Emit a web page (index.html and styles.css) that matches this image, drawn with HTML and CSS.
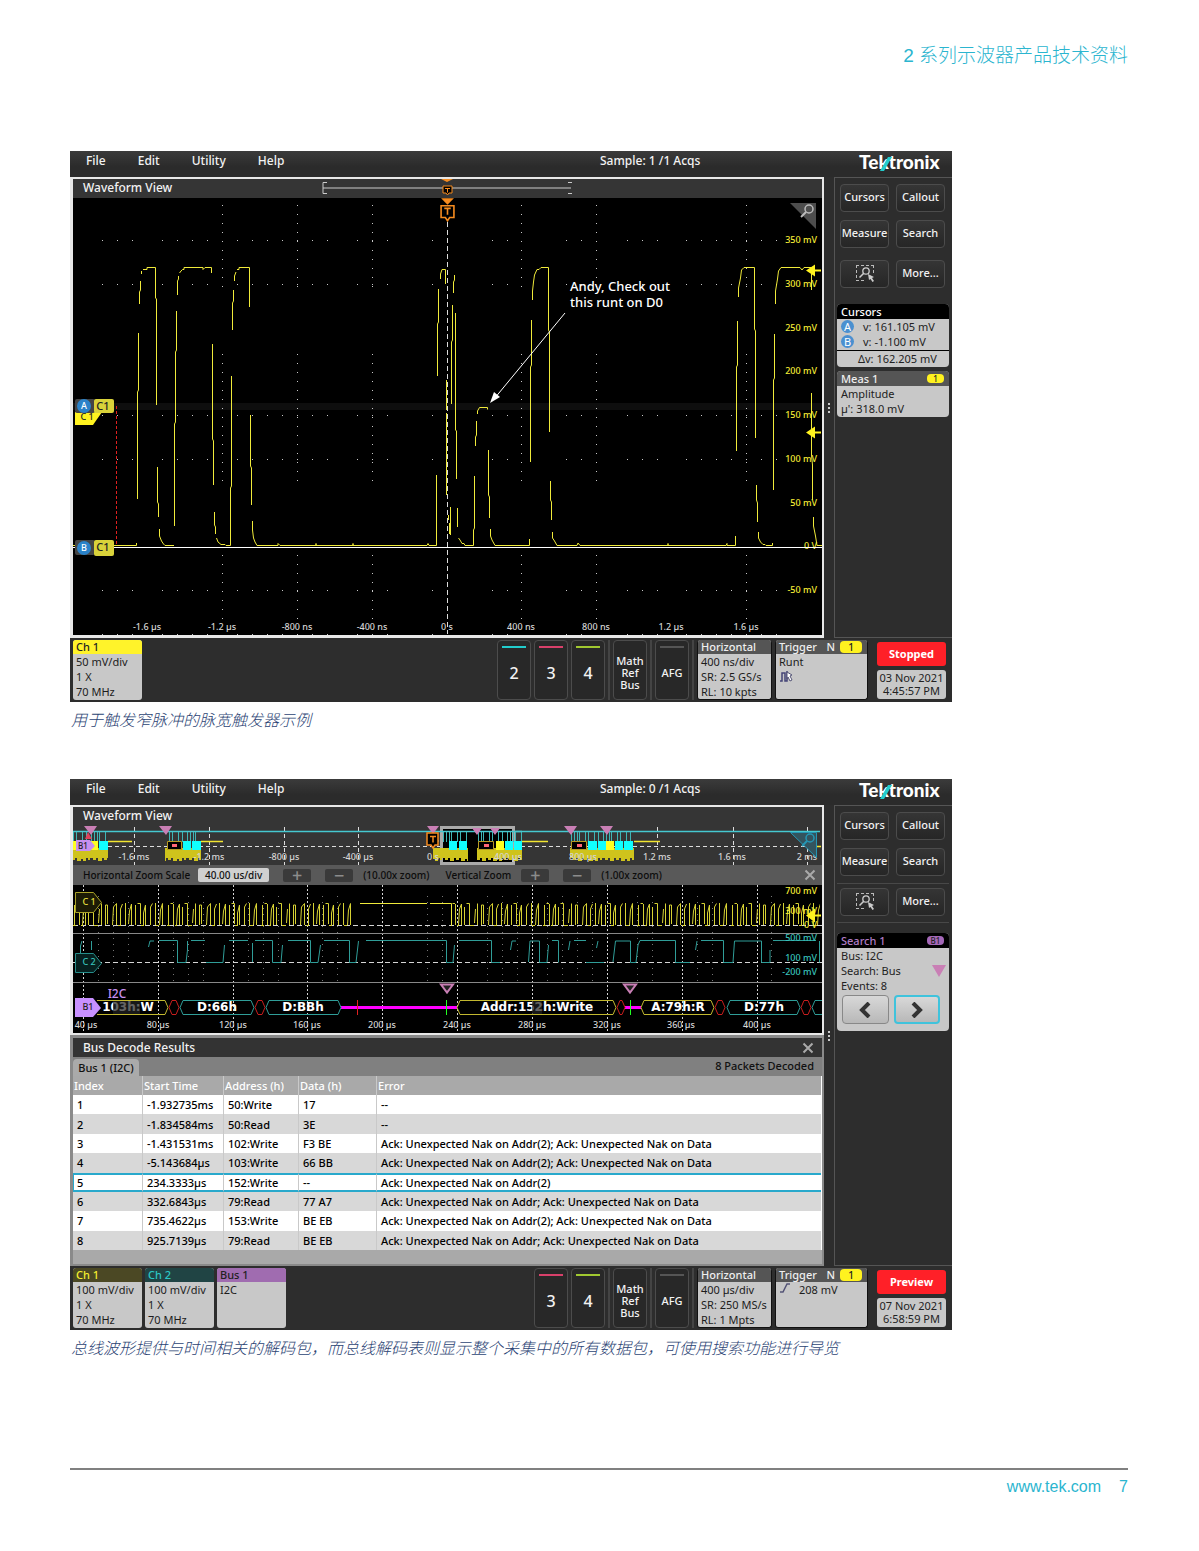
FILE: index.html
```html
<!DOCTYPE html>
<html lang="zh-CN">
<head>
<meta charset="utf-8">
<meta name="viewport" content="width=device-width, initial-scale=1">
<title>2 系列示波器产品技术资料</title>
<link rel="stylesheet" href="styles.css">
</head>
<body>
<svg class="defs" aria-hidden="true">
  <defs>
    <symbol id="zoom-select" viewBox="0 0 20 18">
      <path d="M1 1.500h18M1 16.500h10M1.500 1v15M18.500 1v9" fill="none" stroke="#bbb" stroke-dasharray="3 2"/>
      <circle cx="11" cy="7" r="3.200" fill="none" stroke="#ccc" stroke-width="1.300"/>
      <path d="M8.500 9.500L4.500 13.500" stroke="#ccc" stroke-width="1.600"/>
      <path d="M13 10l6 3-2 1 2 3-1.500 1-2-3-1.500 1z" fill="#ccc"/>
    </symbol>
    <symbol id="cross" viewBox="0 0 12 12">
      <path d="M1.500 1.500l9 9M10.500 1.500l-9 9" stroke="#aaa" stroke-width="2" fill="none"/>
    </symbol>
    <symbol id="trig" viewBox="0 0 14 22">
      <path d="M1 0h12l-6 6z" fill="#f58b1f"/>
      <path d="M1 7h12v11h-4l-2 3-2-3H1z" fill="#000" stroke="#f58b1f" stroke-width="1.500"/>
      <path d="M4 9.500h6M7 9.500v6" stroke="#f58b1f" stroke-width="1.500"/>
    </symbol>
  </defs>
</svg>
<div class="page">
  <header class="doc-head">2 系列示波器产品技术资料</header>
  <main class="figures">
    <figure class="figure">
      <div class="scope">
        <div class="menubar">
          <nav class="menus">
            <button type="button">File</button><button type="button">Edit</button><button type="button">Utility</button><button type="button">Help</button>
          </nav>
          <span class="acqs">Sample: 1 /1 Acqs</span>
          <span class="logo">Te<span class="k">k<svg viewBox="0 0 12 16" aria-hidden="true"><path d="M0 16L8 2h4L4 16z" fill="#2cc"/></svg></span>tronix</span>
        </div>
        <div class="work">
          <section class="wave">
            <div class="wave-title"><h2>Waveform View</h2>
              <svg class="extent" viewBox="320 179 256 19" aria-hidden="true">
                <path d="M327 182.500h-4v11h4M323 188h248M568 182.500h4M568 193.500h4" fill="none" stroke="#ccc"/>
                <path d="M441 179h12l-6 3z" fill="#f58b1f"/>
                <path d="M443 186h9v7h-3l-1.500 2-1.500-2h-3z" fill="#000" stroke="#f58b1f"/>
                <path d="M445 188.500h5M447.500 188.500v4" stroke="#f58b1f"/>
              </svg>
            </div>
            <svg class="plot" viewBox="73 198 749 437" role="img" aria-label="Channel 1 waveform">
              <rect x="73" y="403" width="749" height="7" fill="#0e0e0e"/>
              <g class="dots-v">
                <path d="M222.500 205v82M297.500 205v82M372.500 205v82M521.500 205v82M596.500 205v82M746.500 205v82"/>
                <path d="M222.500 354v132M297.500 354v132M372.500 354v132M521.500 354v132M596.500 354v132M746.500 354v132"/>
                <path d="M222.500 555v66M297.500 555v66M372.500 555v66M521.500 555v66M596.500 555v66M746.500 555v66"/>
              </g>
              <g class="dots-h">
                <path id="row" d="M102 240.500h31M162 240.500h46M237 240.500h91M357 240.500h31M432 240.500h2M492 240.500h16M566 240.500h16M627 240.500h31M686 240.500h95"/>
                <use href="#row" y="44"/><use href="#row" y="175"/><use href="#row" y="219"/><use href="#row" y="350"/><use href="#row" y="394"/>
              </g>
              <path d="M447.500 222V634" stroke="#ddd" stroke-dasharray="5 3"/>
              <path d="M116.500 406V545" stroke="#e02020" stroke-dasharray="3 2"/>
              <g class="axis-y">
                <text x="817" y="243">350 mV</text><text x="817" y="287">300 mV</text><text x="817" y="331">250 mV</text><text x="817" y="374">200 mV</text><text x="817" y="418">150 mV</text><text x="817" y="462">100 mV</text><text x="817" y="506">50 mV</text><text x="817" y="549">0 V</text><text x="817" y="593">-50 mV</text>
              </g>
              <g class="axis-x">
                <text x="147" y="630">-1.6 µs</text><text x="222" y="630">-1.2 µs</text><text x="297" y="630">-800 ns</text><text x="372" y="630">-400 ns</text><text x="447" y="630">0 s</text><text x="521" y="630">400 ns</text><text x="596" y="630">800 ns</text><text x="671" y="630">1.2 µs</text><text x="746" y="630">1.6 µs</text>
              </g>
              <path d="M73 547.500H822" stroke="#fff" stroke-width="1"/>
              <g class="ch1">
                <path d="M73 545.500H136.500V543M137.500 499V392L138.500 390V333M139.500 304V292L140.500 290V281M141.500 274V271M143 269.500H147V267.500H155.500V298L156.500 299V405M157.500 467V502L158.500 504V517M159.500 529V536L161.500 541L163.500 544L165 545.500H174"/>
                <path d="M174.500 526V424L175.500 422V352L176.500 350V311M177.500 295V281L178.500 279V276M179.500 273L181 271L182.500 269.500H184V267.500H203V269.500L205 267.500H211.500V273M212.500 344V439L213.500 441V485M214.500 512V525L215.500 527V534M216.500 538L218 542L221 544.500H225L226 545.500H230.500V488L231.500 486V376M232.500 330V303L233.500 301V290M234.500 281V276L236 272M237 269.500H239V267.500H249.500V307"/>
                <path d="M250.500 415V466L251.500 468V505M252.500 521V530L253.500 538L255 542L257 545.500H278V543.500L280 545.500H316V543.500V545.500H353V543.500V545.500H427L428 543.500L429 545.500H436.500V475M437.500 376V324L438.500 322V289M440.500 279V274L442 269.500H445.500V284M446.500 380V410M446.500 413V495M448.500 515V520M449.500 523V534M450.500 507V535M451.500 404V342L452.500 340V305M453.500 293V282L454.500 280V275M455.500 313V430L456.500 431V479M457.500 508V527M458.500 538L460 540L462 543.500H464L465 545.500H473.500V530L474.500 528V476M475.500 446V437L476.500 435V421M477.500 414V411L479.500 407.500H487.500V409.500M488.500 450V495L489.500 497V518M490.500 529V536L492 540L495 545.500H529.500V539"/>
                <path d="M530.500 462V367L531.500 365V320M532.500 300V291L533.500 282L534.500 275L537 269.500H539L541 267.500H548.500V330L549.500 332V432M550.500 481V500L551.500 502V520M552.500 532V538L554.500 541L557 545.500H577L578 543L580 545.500H668V543.500V545.500H726L727 543.500V545.500H735.500V536M736.500 451V367L737.500 365V321M738.500 297V288L740.500 278L741.500 270L744 267.500H754.500V329L755.500 331V438M756.500 485V500L757.500 503V522M758.500 532V538L760.500 542L763 544.500H765L766 545.500H772.500V543M773.500 490V380L774.500 378V334M775.500 304V291L777.500 279L778.500 271L781 267.500H800L802 270L804 267.500H811.500V290M811.500 393V455L812.500 465V500M813.500 517V526L815.500 536L817 545.500H822"/>
              </g>
              <path class="ptr" d="M806 270.500l9-6v12zM813 269.500h8v2h-8zM806 432.500l9-6v12zM813 431.500h8v2h-8z"/>
              <path d="M565 313L494 399" stroke="#fff"/><path d="M490 403l4-11 6 5z" fill="#fff"/>
              <g class="note"><text x="570" y="291">Andy, Check out</text><text x="570" y="307">this runt on D0</text></g>
              <use href="#trig" x="440" y="198" width="15" height="24"/>
              <path d="M790 203h26v26z" fill="#4d4d4d"/><circle cx="809" cy="209" r="4" fill="none" stroke="#bbb" stroke-width="1.500"/><path d="M806 212l-5 5" stroke="#bbb" stroke-width="2"/>
              <g class="tags">
                <path d="M75 412h27l-9 13H75z" fill="#fff21f"/><text class="dk" x="87" y="420">C 1</text>
                <rect x="75" y="399" width="20" height="14" rx="2" fill="#444"/><circle cx="84" cy="406" r="7" fill="#2a82c9"/><text x="84" y="409">A</text>
                <rect x="94" y="399" width="20" height="14" rx="2" fill="#d9d23a"/><text class="dk big" x="103" y="410">C1</text>
                <rect x="75" y="540" width="20" height="15" rx="2" fill="#444"/><circle cx="84" cy="548" r="7" fill="#2a82c9"/><text x="84" y="551">B</text>
                <rect x="94" y="540" width="20" height="16" rx="2" fill="#d9d23a"/><text class="dk big" x="103" y="551">C1</text>
              </g>
            </svg>
          </section>
        </div>
        <div class="grip"><i></i><i></i><i></i></div>
        <aside class="side">
          <div class="tools">
            <button type="button">Cursors</button><button type="button">Callout</button><button type="button">Measure</button><button type="button">Search</button>
          </div>
          <div class="tools extra">
            <button type="button" aria-label="Zoom select"><svg class="ico"><use href="#zoom-select"/></svg></button><button type="button">More...</button>
          </div>
          <section class="card">
            <h3 class="black">Cursors</h3>
            <p class="cur"><span class="dot">A</span>v: 161.105 mV</p>
            <p class="cur"><span class="dot">B</span>v: -1.100 mV</p>
            <p class="delta">Δv: 162.205 mV</p>
          </section>
          <section class="card">
            <h3>Meas 1<span class="pill">1</span></h3>
            <p>Amplitude</p>
            <p>µ': 318.0 mV</p>
          </section>
        </aside>
        <footer class="status">
          <section class="badge"><h3 class="c1">Ch 1</h3><p>50 mV/div</p><p>1 X</p><p>70 MHz</p></section>
          <div class="controls">
            <button type="button" class="key cyan">2</button><button type="button" class="key red">3</button><button type="button" class="key green">4</button><i class="sep"></i>
            <button type="button" class="key small">Math<br>Ref<br>Bus</button><i class="sep"></i>
            <button type="button" class="key small grey">AFG</button><i class="sep"></i>
            <section class="badge horiz"><h3>Horizontal</h3><p>400 ns/div</p><p>SR: 2.5 GS/s</p><p>RL: 10 kpts</p></section>
            <section class="badge trigger"><h3>Trigger<span class="n">N</span><span class="pill">1</span></h3><p>Runt</p><p><svg class="runt" viewBox="0 0 14 14" aria-hidden="true"><path d="M1 12h2V4h3v8h2V2" fill="none" stroke="#447" stroke-width="1.500"/><path d="M8 3l5 3-2 1 2 4-2 1-2-4-1 2z" fill="#fff" stroke="#557"/></svg></p></section>
            <div class="run"><button type="button">Stopped</button><p>03 Nov 2021<br>4:45:57 PM</p></div>
          </div>
        </footer>
      </div>
      <figcaption>用于触发窄脉冲的脉宽触发器示例</figcaption>
    </figure>

    <figure class="figure">
      <div class="scope">
        <div class="menubar">
          <nav class="menus">
            <button type="button">File</button><button type="button">Edit</button><button type="button">Utility</button><button type="button">Help</button>
          </nav>
          <span class="acqs">Sample: 0 /1 Acqs</span>
          <span class="logo">Te<span class="k">k<svg viewBox="0 0 12 16" aria-hidden="true"><path d="M0 16L8 2h4L4 16z" fill="#2cc"/></svg></span>tronix</span>
        </div>
        <div class="work">
          <section class="wave">
            <div class="wave-title"><h2>Waveform View</h2></div>
            <svg class="plot over" viewBox="73 826 749 39" role="img" aria-label="Overview">
              <defs>
                <pattern id="burst" x="570" y="826" width="32" height="39" patternUnits="userSpaceOnUse">
                  <path d="M1.500 6v10M4.500 6v10M7.500 6v10M9.500 6v10M15.500 6v10M18.500 6v10M24.500 6v10M28.500 6v10" stroke="#3fb5b5"/>
                  <path d="M0 22h32v12h-2v-2h-2v3h-3v-2h-2v2h-4v-3h-2v2h-3v-2h-2v3h-4v-3h-2v2h-3v-2H0z" fill="#cfc31c"/>
                </pattern>
                <pattern id="clk" x="73" y="895" width="94" height="34" patternUnits="userSpaceOnUse">
                  <path d="M1.500 30V10M3.500 8.500H6M6.500 9V30M9.500 30L10.500 14L12.500 9V30M15.500 30V12M17.500 8.500H20.500V30M25.500 28L26.500 14M28.500 8.500V30M32.500 30V10H34.500V29M39.500 30L40.500 12L43.500 8.500V30M47.500 30V14L49.500 9M52.500 8V30M55.500 29L56.500 16L58.500 9V30M62.500 30V10M64.500 8.500H67.500V29M70.500 30V18L72.500 10V30M77.500 30V12L79.500 8.500M82.500 8V30M86.500 30L87.500 15L89.500 8.500V30M0 30.500H3M8 30.500H10M21 30.500H25M45 30.500H48M68 30.500H71M83 30.500H86" fill="none" stroke="#d6d133"/>
                </pattern>
              </defs>
              <path d="M73 846.500H821" stroke="#ddd" stroke-dasharray="4 3"/>
              <path d="M134.500 827V865M209.500 827V865M284.500 827V865M358.500 827V865M657.500 827V850M733.500 827V865M807.500 827V865" stroke="#ddd" stroke-dasharray="4 3"/>
              <path d="M73 831.500H820" stroke="#45c8d0" stroke-width="1.500"/>
              <path d="M108 841.500h24M201 841.500h22M522 841.500h26M634 841.500h26M817 846.500h4" stroke="#f2e530" stroke-width="1.500"/>
              <rect x="440" y="826" width="75" height="39" fill="#aaa"/>
              <path d="M443 829h69v33h-69z" fill="#000"/>
              <path d="M73 826h35v39h-35zM165 826h36v39h-36zM433 840h10v25h-10zM443 826h25v39h-25zM477 826h45v39h-45zM570 826h64v39h-64z" fill="url(#burst)"/>
              <path d="M440 831.500H522" stroke="#45c8d0" stroke-width="1.500"/>
              <path d="M440 827.500h75M440 863.500h75" stroke="#aaa" stroke-width="2"/>
              <g class="axis-x"><text x="134" y="860">-1.6 ms</text><text x="209" y="860">-1.2 ms</text><text x="284" y="860">-800 µs</text><text x="358" y="860">-400 µs</text><text x="433" y="860">0 s</text><text x="508" y="860">400 µs</text><text x="583" y="860">800 µs</text><text x="657" y="860">1.2 ms</text><text x="732" y="860">1.6 ms</text><text x="807" y="860">2 ms</text></g>
              <path d="M99 841h9v9h-9zM183 841h8v9h-8zM192 841h9v9h-9zM449 841h8v9h-8zM459 841h8v9h-8zM505 841h8v9h-8zM514 841h8v9h-8zM588 841h9v9h-9zM598 841h8v9h-8zM615 841h8v9h-8zM624 841h9v9h-9z" fill="#1ff"/>
              <path d="M73 841h3v9h-3zM90 841h8v9h-8zM496 841h8v9h-8zM606 841h8v9h-8z" fill="#ff2"/>
              <path d="M167.500 841.500h14v8h-14zM478.500 841.500h15v8h-15zM571.500 841.500h15v8h-15z" fill="#000" stroke="#b79a22"/>
              <path d="M172 845.500h5M484 845.500h5M577 845.500h5" stroke="#f67" stroke-width="3"/>
              <path class="mark" d="M84 826h13l-6 9zM159 826h13l-6 9zM427 826h12l-6 8zM564 826h13l-6 9zM600 826h13l-6 9zM472 828h10l-5 7zM490 828h10l-5 7z"/>
              <path d="M85 839l3-7 4 7z" fill="#e0405a"/>
              <path d="M76 840h14l5 6-5 5H76z" fill="#c890f0"/><text class="tiny" x="83" y="849">B1</text>
              <path d="M427 833h11v12h-3l-2 3-2-3h-4z" fill="#000" stroke="#f58b1f" stroke-width="1.500"/><path d="M430 836.500h6M433 836.500v6" stroke="#f58b1f" stroke-width="1.500"/>
              <path d="M790.500 832.500h26v25z" fill="#33545e" stroke="#2596b4"/><circle cx="810" cy="838" r="4" fill="none" stroke="#2596b4" stroke-width="1.500"/><path d="M807 841l-5 5" stroke="#2596b4" stroke-width="2"/>
            </svg>
            <div class="zoombar">
              <label for="hz">Horizontal Zoom Scale</label><input id="hz" type="text" value="40.00 us/div">
              <button type="button">+</button><button type="button">−</button><span>(10.00x zoom)</span>
              <span class="vz">Vertical Zoom</span><button type="button">+</button><button type="button">−</button><span>(1.00x zoom)</span>
              <button type="button" class="close" aria-label="Close"><svg><use href="#cross"/></svg></button>
            </div>
            <svg class="plot" viewBox="73 885 749 148" role="img" aria-label="Zoomed waveforms and bus decode">
              <g stroke="#d5d5d5"><path stroke-dasharray="2 2" d="M83.500 885V1033M158.500 885V1033M233.500 885V1033M307.500 885V1033M382.500 885V1033M457.500 885V1033M532.500 885V1033M607.500 885V1033M682.500 885V1033M757.500 885V1033"/>
              <path stroke="#777" stroke-dasharray="1 5" d="M98.500 896V981M113.500 896V981M128.500 896V981M173.500 896V981M188.500 896V981M203.500 896V981M248.500 896V981M263.500 896V981M278.500 896V981M322.500 896V981M337.500 896V981M427.500 896V981M442.500 896V981M487.500 896V981M502.500 896V981M517.500 896V981M547.500 896V981M562.500 896V981M577.500 896V981M592.500 896V981M637.500 896V981M652.500 896V981M697.500 896V981M712.500 896V981M771.500 896V981"/>
              <path stroke-dasharray="5 3" d="M73 925.500H822M73 962.500H822"/></g>
              <path d="M73 933.500H822M73 982.500H822" stroke="#888"/>
              <path d="M73 895h282v34H73zM452 895h368v34H452z" fill="url(#clk)"/>
              <path class="ch1" d="M360 903.500H427M430 903.500H451.500V926"/>
              <path class="ch2" d="M80.500 962V946L82 941M91.500 941V950M148.500 947L150 941H154M159 940.500H177.500V962.500H186L187.500 950V941M191 940.500H205M206 962.500H223L224.500 945M229 940.500H248M252.500 962V943M255 940.500H272.500V962.500H281L282.500 945M288 940.500H310.500V962.500H318L320.500 945M324 940.500H349.500V962.500H356L358.500 941M366 940.500H446.500V962.500H453L454.500 945M459 940.500H491.500V962.500H500M510.500 950L512 941H516M528.500 962L530 941H539.500V962.500H547L548.500 945M552 940.500H558.500V962.500M568.500 950L570 941M574 940.500H586M586 962.500H604M596.500 948L598 941M613 962L615.500 941H630.500V962.500H636L638 945L640 940.500H675.500V962.500H690M695.500 950L697 941M701 940.500H723.500V962.500H733L734.500 941H761.500V962.500H770V950M773 940.500H816M819.500 941V962.500"/>
              <g class="axis-y"><text x="817" y="894">700 mV</text><text x="817" y="914">300 mV</text><text x="817" y="928">0 V</text></g>
              <g class="axis-y cy"><text x="817" y="941">500 mV</text><text x="817" y="961">100 mV</text><text x="817" y="975">-200 mV</text></g>
              <path class="ptr" d="M806 915.500l9-7v14zM813 914.500h8v2h-8z"/>
              <path d="M341 1007.500H457M625 1007.500H641" stroke="#f0f" stroke-width="3"/>
              <path d="M357.500 1000v15" stroke="#e02020"/><path d="M446.500 1000v15M630.500 1000v15" stroke="#2f2"/>
              <g class="bus">
                <path class="y" d="M97 1000.500h68l3 7-3 7H97M460 1000.500h153l3 7-3 7H460l-3-7zM644 1000.500h67l3 7-3 7h-67l-3-7z"/>
                <path class="r" d="M172 1000.500h4l3 7-3 7h-4l-3-7zM258 1000.500h4l3 7-3 7h-4l-3-7zM620 1000.500h2l3 7-3 7h-2l-3-7zM718 1000.500h4l3 7-3 7h-4l-3-7zM804 1000.500h4l3 7-3 7h-4l-3-7z"/>
                <path class="c" d="M183 1000.500h68l3 7-3 7h-68l-3-7zM269 1000.500h69l3 7-3 7h-69l-3-7zM730 1000.500h67l3 7-3 7h-67l-3-7zM822 1000.500h-7l-3 7 3 7h7"/>
                <text x="128" y="1011">103h:W</text><text x="217" y="1011">D:66h</text><text x="303" y="1011">D:BBh</text><text x="537" y="1011">Addr:152h:Write</text><text x="678" y="1011">A:79h:R</text><text x="764" y="1011">D:77h</text>
                <path d="M113 1001h27v13h-27zM532 1001h10v13h-10z" fill="#222" opacity=".7"/>
              </g>
              <g class="tags">
                <path d="M75.500 892.500h18l8 10-8 10h-18z" fill="#1c1b05" stroke="#a8a129"/><text class="yl" x="89" y="905">C 1</text>
                <path d="M75.500 953.500h18l8 10-8 9h-18z" fill="#06201f" stroke="#268d8a"/><text class="cl" x="89" y="965">C 2</text>
                <path d="M75 998h18l8 10-8 9H75z" fill="#c890ff"/><text class="dk" x="88" y="1010">B1</text>
                <text class="vi" x="117" y="998">I2C</text>
              </g>
              <path d="M441 984.500h12l-6 8zM624 984.500h12l-6 8z" fill="#222" stroke="#c97fb5" stroke-width="2"/>
              <g class="axis-x"><text x="86" y="1028">40 µs</text><text x="158" y="1028">80 µs</text><text x="233" y="1028">120 µs</text><text x="307" y="1028">160 µs</text><text x="382" y="1028">200 µs</text><text x="457" y="1028">240 µs</text><text x="532" y="1028">280 µs</text><text x="607" y="1028">320 µs</text><text x="681" y="1028">360 µs</text><text x="757" y="1028">400 µs</text></g>
            </svg>
          </section>
          <section class="results">
            <div class="results-title"><h2>Bus Decode Results</h2><button type="button" class="close" aria-label="Close"><svg><use href="#cross"/></svg></button></div>
            <div class="tabs"><button type="button">Bus 1 (I2C)</button><span>8 Packets Decoded</span></div>
            <table>
              <colgroup><col class="w1"><col class="w2"><col class="w3"><col class="w4"><col></colgroup>
              <thead><tr><th>Index</th><th>Start Time</th><th>Address (h)</th><th>Data (h)</th><th>Error</th></tr></thead>
              <tbody>
                <tr><td>1</td><td>-1.932735ms</td><td>50:Write</td><td>17</td><td>--</td></tr>
                <tr><td>2</td><td>-1.834584ms</td><td>50:Read</td><td>3E</td><td>--</td></tr>
                <tr><td>3</td><td>-1.431531ms</td><td>102:Write</td><td>F3 BE</td><td>Ack: Unexpected Nak on Addr(2); Ack: Unexpected Nak on Data</td></tr>
                <tr><td>4</td><td>-5.143684µs</td><td>103:Write</td><td>66 BB</td><td>Ack: Unexpected Nak on Addr(2); Ack: Unexpected Nak on Data</td></tr>
                <tr class="sel"><td>5</td><td>234.3333µs</td><td>152:Write</td><td>--</td><td>Ack: Unexpected Nak on Addr(2)</td></tr>
                <tr><td>6</td><td>332.6843µs</td><td>79:Read</td><td>77 A7</td><td>Ack: Unexpected Nak on Addr; Ack: Unexpected Nak on Data</td></tr>
                <tr><td>7</td><td>735.4622µs</td><td>153:Write</td><td>BE EB</td><td>Ack: Unexpected Nak on Addr(2); Ack: Unexpected Nak on Data</td></tr>
                <tr><td>8</td><td>925.7139µs</td><td>79:Read</td><td>BE EB</td><td>Ack: Unexpected Nak on Addr; Ack: Unexpected Nak on Data</td></tr>
              </tbody>
            </table>
          </section>
        </div>
        <div class="grip"><i></i><i></i><i></i></div>
        <aside class="side">
          <div class="tools">
            <button type="button">Cursors</button><button type="button">Callout</button><button type="button">Measure</button><button type="button">Search</button>
          </div>
          <div class="tools extra ruled">
            <button type="button" aria-label="Zoom select"><svg class="ico"><use href="#zoom-select"/></svg></button><button type="button">More...</button>
          </div>
          <section class="card search">
            <h3 class="black">Search 1<span class="pill">B1</span></h3>
            <p>Bus: I2C</p>
            <p class="bus-row">Search: Bus<svg viewBox="0 0 14 12" aria-hidden="true"><path d="M0 0h14L7 12z" fill="#c97fb5"/></svg></p>
            <p>Events: 8</p>
            <div class="steps">
              <button type="button" aria-label="Previous"><svg viewBox="0 0 12 16"><path d="M10 1L3 8l7 7" fill="none" stroke="#333" stroke-width="4"/></svg></button>
              <button type="button" class="on" aria-label="Next"><svg viewBox="0 0 12 16"><path d="M2 1l7 7-7 7" fill="none" stroke="#333" stroke-width="4"/></svg></button>
            </div>
          </section>
        </aside>
        <footer class="status">
          <section class="badge"><h3 class="c1-off">Ch 1</h3><p>100 mV/div</p><p>1 X</p><p>70 MHz</p></section>
          <section class="badge"><h3 class="c2-off">Ch 2</h3><p>100 mV/div</p><p>1 X</p><p>70 MHz</p></section>
          <section class="badge"><h3 class="b1">Bus 1</h3><p>I2C</p></section>
          <div class="controls">
            <button type="button" class="key red">3</button><button type="button" class="key green">4</button><i class="sep"></i>
            <button type="button" class="key small">Math<br>Ref<br>Bus</button><i class="sep"></i>
            <button type="button" class="key small grey">AFG</button><i class="sep"></i>
            <section class="badge horiz"><h3>Horizontal</h3><p>400 µs/div</p><p>SR: 250 MS/s</p><p>RL: 1 Mpts</p></section>
            <section class="badge trigger"><h3>Trigger<span class="n">N</span><span class="pill">1</span></h3><p class="edge"><svg viewBox="0 0 12 12" aria-hidden="true"><path d="M1 10h3l4-8h3" fill="none" stroke="#557" stroke-width="1.500"/></svg>208 mV</p></section>
            <div class="run"><button type="button">Preview</button><p>07 Nov 2021<br>6:58:59 PM</p></div>
          </div>
        </footer>
      </div>
      <figcaption>总线波形提供与时间相关的解码包，而总线解码表则显示整个采集中的所有数据包，可使用搜索功能进行导览</figcaption>
    </figure>
  </main>
  <footer class="doc-foot"><a href="#">www.tek.com</a><span>7</span></footer>
</div>
</body>
</html>
```
FILE: styles.css
```css
* { box-sizing: border-box; }
body { margin: 0; background: #fff; }
h2, h3, p, figure { margin: 0; font-weight: 500; font-size: inherit; }
button, input { font: inherit; color: inherit; border: 0; padding: 0; margin: 0; background: none; }
.defs { position: absolute; width: 0; height: 0; }

.page { padding: 43px 71px 52px 70px; }
.doc-head { text-align: right; color: #2bb5cf; font: 300 19px/26px "Liberation Sans", "Noto Sans CJK SC", sans-serif; }
.figures { display: flex; flex-direction: column; gap: 41px; padding-top: 82px; }
.figure { max-width: 882px; }
figcaption { height: 36px; padding: 2px 0 0 1px; color: #2c4474; font: italic 300 16px/30px "Noto Sans CJK SC", sans-serif; white-space: nowrap; }
.doc-foot { display: flex; justify-content: flex-end; gap: 18px; margin-top: 102px; padding-top: 5px; border-top: 2px solid #808080; color: #2bb5cf; font: 16px/24px "Liberation Sans", sans-serif; }
.doc-foot a { color: inherit; text-decoration: none; }

.scope { display: grid; grid-template-columns: minmax(0, 1fr) 10px 118px; grid-template-rows: 26px auto 64px; background: #2d2d2d; color: #f2f2f2; font: 500 11px/15px "Noto Sans", sans-serif; }
.menubar { grid-column: 1 / -1; display: grid; grid-template-columns: 530fr 259fr 93fr; background: linear-gradient(#3b3b3b, #2b2b2b 60%); font-size: 12px; line-height: 20px; }
.menus { display: flex; gap: 32px; padding-left: 16px; align-items: flex-start; }
.logo { color: #fff; font: 900 19px/22px Lato, sans-serif; }
.logo .k { position: relative; }
.logo svg { position: absolute; left: 2px; bottom: 2px; width: 12px; height: 16px; }

.work { display: flex; flex-direction: column; }
.wave { border: solid #e8e8e8; border-width: 2px 2px 3px 3px; background: #000; }
.wave:not(:last-child) { border-bottom-width: 2px; }
.wave-title { display: flex; justify-content: space-between; height: 19px; padding: 0 246px 0 10px; background: #353535; }
.wave h2, .results h2 { font-size: 12px; line-height: 18px; }
.extent { width: 256px; height: 19px; }
.plot { display: block; width: 100%; height: auto; }
.over { background: #353535; }
.dots-v path { stroke: #c8c8c8; stroke-dasharray: 1 8; }
.dots-h path { stroke: #c8c8c8; stroke-dasharray: 1 14; }
.dots-h, .ch1, .ch2 { fill: none; }
.ch1 { stroke: #f0ea3a; }
.ch2 { stroke: #2f9d98; }
.ptr { fill: #fff21f; }
.mark { fill: #c97fb5; }
.axis-y { fill: #f5ec35; font-size: 9px; text-anchor: end; }
.axis-y.cy { fill: #38c3bd; }
.axis-x { fill: #d5d5d5; font-size: 9px; text-anchor: middle; }
.note { fill: #fff; font-size: 13px; }
.tags { fill: #fff; font-size: 9px; text-anchor: middle; }
.tags .dk, .tiny { fill: #222; }
.tiny { font-size: 8px; text-anchor: middle; }
.tags .big { font-size: 11px; }
.tags .yl { fill: #e8e040; }
.tags .cl { fill: #38c3bd; }
.tags .vi { fill: #c890f0; font-size: 12px; }
.bus { fill: none; font: 700 12px "DejaVu Sans", sans-serif; text-anchor: middle; }
.bus text { fill: #fff; }
.bus .y { stroke: #c2b82f; }
.bus .r { stroke: #c81e1e; }
.bus .c { stroke: #2f9d98; }

.zoombar { display: flex; align-items: center; height: 20px; padding: 0 6px 0 10px; background: #595959; color: #0c0c0c; font-size: 10px; white-space: nowrap; }
.zoombar input { width: 71px; height: 14px; margin: 0 14px 0 8px; border-radius: 2px; background: #d0d0d0; color: #111; text-align: center; }
.zoombar button { width: 28px; height: 13px; margin-right: 14px; border-radius: 2px; background: #3a3a3a; color: #8c8c8c; font-size: 18px; line-height: 12px; }
.zoombar button + span { margin-left: -4px; }
.zoombar .vz { margin: 0 10px 0 16px; }
.zoombar .close, .close { width: 12px; height: 12px; margin: 0 0 0 auto; background: none; }
.close svg { display: block; width: 12px; height: 12px; }

.results { border: solid #8a8a8a; border-width: 3px 2px 2px 3px; background: #a9a9a9; padding-bottom: 14px; }
.results-title { display: flex; align-items: center; height: 19px; padding: 0 8px 0 10px; background: #333; }
.tabs { display: flex; justify-content: space-between; height: 19px; padding: 0 8px 0 0; background: #808080; color: #111; line-height: 18px; }
.tabs button { align-self: flex-end; height: 17px; width: 66px; border-radius: 4px 4px 0 0; background: #aaa; line-height: 14px; }
table { width: 100%; height: 174px; table-layout: fixed; border-collapse: separate; border-spacing: 0; border-right: 1px solid #fff; color: #000; }
.w1 { width: 70px; } .w2 { width: 81px; } .w3 { width: 75px; } .w4 { width: 78px; }
th, td { height: 19px; padding: 0 0 0 4px; text-align: left; font-weight: 500; border-right: 1px solid #c9c9c9; line-height: 15px; white-space: nowrap; }
th { padding-left: 1px; color: #fff; background: #a9a9a9; }
th:last-child, td:last-child { border-right: 0; }
td { background: #fff; }
tbody tr:nth-child(even) td { background: #d8d8d8; }
.sel td { border-top: 2px solid #29a9cc; border-bottom: 2px solid #29a9cc; }
.sel td:first-child { border-left: 1px solid #29a9cc; padding-left: 3px; }

.grip { display: flex; flex-direction: column; justify-content: center; align-items: center; gap: 2px; }
.grip i { width: 2px; height: 2px; background: #ccc; }
.side { border-left: 1px solid #555; border-top: 1px solid #555; border-bottom: 1px solid #555; padding: 6px 3px 0 2px; }
.tools { display: grid; grid-template-columns: 1fr 1fr; gap: 8px 7px; padding: 0 4px 0 3px; }
.tools button { height: 28px; border: 1px solid #4c4c4c; border-radius: 4px; background: linear-gradient(#353535, #262626); line-height: 24px; padding-bottom: 2px; white-space: nowrap; }
.tools.extra { padding-top: 12px; padding-bottom: 16px; }
.tools.ruled { margin-top: 7px; padding-top: 4px; border: solid #484848; border-width: 1px 0; padding-bottom: 6px; margin-bottom: 10px; }
.tools .ico { display: block; width: 20px; height: 18px; margin: 0 auto; }
.card { margin-bottom: 4px; border-radius: 4px; background: #c8c8c8; color: #222; overflow: hidden; padding-bottom: 1px; }
.card p, .badge p { font-weight: 400; padding-left: 4px; white-space: nowrap; }
.card h3 { display: flex; justify-content: space-between; align-items: center; height: 15px; padding: 0 5px 0 4px; background: #555; color: #eee; }
.card .black { background: #000; color: #fff; }
.card .cur { display: flex; gap: 9px; }
.dot { width: 13px; height: 13px; margin-top: 1px; border-radius: 50%; background: #4a90d0; color: #fff; line-height: 13px; text-align: center; }
.card .delta { border-top: 1px solid #000; margin-top: 1px; padding-left: 21px; }
.pill { width: 17px; height: 9px; border-radius: 4px; background: #fff21f; color: #222; font-size: 8px; line-height: 9px; text-align: center; }
.search h3.black { color: #b07cc6; }
.search .pill { background: #a468b8; }
.bus-row { display: flex; justify-content: space-between; align-items: center; }
.card .bus-row { padding-right: 3px; }
.bus-row svg { width: 14px; height: 12px; }
.steps { display: grid; grid-template-columns: 1fr 1fr; gap: 5px; padding: 2px 9px 6px 5px; }
.steps button { height: 29px; border: 1px solid #888; border-radius: 4px; background: linear-gradient(#d8d8d8, #b8b8b8); }
.steps .on { border: 2px solid #3fc3dc; }
.steps svg { display: block; width: 12px; height: 16px; margin: 0 auto; }

.status { grid-column: 1 / -1; display: flex; gap: 3px; padding: 2px 6px 2px 3px; }
.badge { width: 69px; border-radius: 3px; background: #c8c8c8; color: #1c1c1c; overflow: hidden; }
.badge h3 { height: 14px; padding-left: 3px; line-height: 14px; background: #555; color: #eee; }
.badge p { padding-left: 3px; }
.badge .c1 { background: #fff32a; color: #222; }
.badge .c1-off { background: #4b4824; color: #f5ee30; }
.badge .c2-off { background: #204444; color: #2cc8c4; }
.badge .b1 { background: #a06cb0; color: #222; }
.badge.horiz { width: 75px; }
.badge.trigger { width: 93px; }
.horiz, .trigger { border: solid #111; border-width: 0 1px 1px; }
.trigger h3 { display: flex; align-items: center; }
.trigger .n { margin: 0 5px 0 auto; }
.trigger .pill { width: 22px; height: 12px; margin-right: 5px; font-size: 10px; line-height: 12px; }
.runt { width: 14px; height: 14px; }
.edge { display: flex; gap: 8px; }
.edge svg { width: 12px; height: 12px; }
.controls { display: flex; gap: 3px; margin-left: auto; }
.key { width: 34px; border: 1px solid #4c4c4c; border-radius: 4px; background: #282828; font-size: 16px; display: flex; flex-direction: column; align-items: center; justify-content: center; padding-top: 6px; position: relative; }
.key::before { content: ""; position: absolute; top: 5px; left: 4px; right: 4px; height: 2px; }
.key.small { display: block; font-size: 11px; line-height: 12px; }
.cyan::before { background: #2cc; }
.red::before { background: #d8406a; }
.green::before { background: #a0c830; }
.grey::before { background: #555; }
.sep { width: 2px; background: #444; }
.run { width: 69px; margin-left: 6px; display: flex; flex-direction: column; gap: 4px; padding-top: 2px; }
.run button { height: 24px; border-radius: 3px; background: #ff2028; color: #fff; font-weight: 700; line-height: 20px; }
.run p { height: 29px; padding: 1px 0 0; border-radius: 3px; background: #c8c8c8; color: #222; font-weight: 400; text-align: center; line-height: 13px; white-space: nowrap; }
```
